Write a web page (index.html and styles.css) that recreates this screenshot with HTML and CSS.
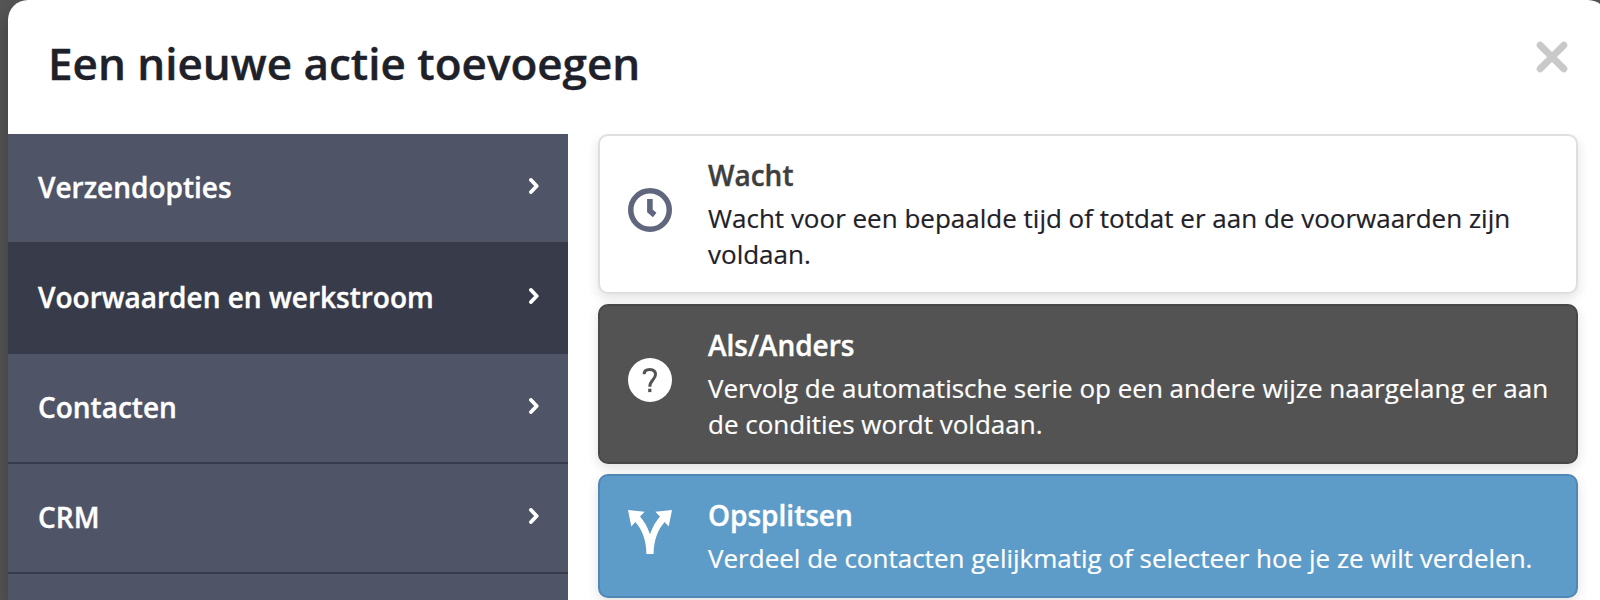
FILE: index.html
```html
<!DOCTYPE html>
<html lang="nl">
<head>
    <meta charset="UTF-8">
    <meta name="viewport" content="width=device-width, initial-scale=1.0">
    <title>Een nieuwe actie toevoegen</title>
    <link rel="stylesheet" href="styles.css">
</head>
<body>
    <div class="modal">
        <header class="modal-header">
            <h1>Een nieuwe actie toevoegen</h1>
            <button class="close" aria-label="Sluiten">
                <svg width="32" height="32" viewBox="0 0 32 32"><path d="M4.2 4.2l23.6 23.6M27.8 4.2L4.2 27.8"/></svg>
            </button>
        </header>

        <div class="modal-body">
            <nav class="sidebar">
                <a class="item">Verzendopties <svg class="chevron" width="10" height="16" viewBox="0 0 10 16"><path d="M2 2l5.7 6L2 14"/></svg></a>
                <a class="item active">Voorwaarden en werkstroom <svg class="chevron" width="10" height="16" viewBox="0 0 10 16"><path d="M2 2l5.7 6L2 14"/></svg></a>
                <a class="item">Contacten <svg class="chevron" width="10" height="16" viewBox="0 0 10 16"><path d="M2 2l5.7 6L2 14"/></svg></a>
                <a class="item">CRM <svg class="chevron" width="10" height="16" viewBox="0 0 10 16"><path d="M2 2l5.7 6L2 14"/></svg></a>
                <a class="item"></a>
            </nav>

            <div class="cards">
                <div class="card wait">
                    <svg class="icon" width="44" height="44" viewBox="0 0 44 44">
                        <circle cx="22" cy="22" r="19.25" fill="none" stroke="#5f667e" stroke-width="5.5"/>
                        <path d="M21.9 11v12l4.8 4" fill="none" stroke="#5f667e" stroke-width="5.6"/>
                    </svg>
                    <div class="text">
                        <h2>Wacht</h2>
                        <p>Wacht voor een bepaalde tijd of totdat er aan de voorwaarden zijn voldaan.</p>
                    </div>
                </div>

                <div class="card if-else">
                    <svg class="icon" width="44" height="44" viewBox="0 0 44 44">
                        <circle cx="22" cy="22" r="22" fill="#fff"/>
                        <path d="M16.1 16.3c0-3 2.2-4.9 5.7-4.9s5.7 2 5.7 5.2c0 5-5.7 5.4-5.7 12.2" fill="none" stroke="#535353" stroke-width="3"/>
                        <rect x="20.2" y="30.7" width="3.2" height="3.4" fill="#535353"/>
                    </svg>
                    <div class="text">
                        <h2>Als/Anders</h2>
                        <p>Vervolg de automatische serie op een andere wijze naargelang er aan de condities wordt voldaan.</p>
                    </div>
                </div>

                <div class="card split">
                    <svg class="icon" width="44" height="44" viewBox="0 0 44 44" fill="#fff">
                        <path d="M0 0L16.7 1.7L12 6.4C15.6 10.5 19.6 16.5 22 24.3C24.4 16.5 28.4 10.5 32 6.4L27.3 1.7L44 0L40.7 16.5L36.6 12C29.5 20 25.6 31 25.6 44H18.4C18.4 31 14.5 20 7.4 12L3.3 16.5z"/>
                    </svg>
                    <div class="text">
                        <h2>Opsplitsen</h2>
                        <p>Verdeel de contacten gelijkmatig of selecteer hoe je ze wilt verdelen.</p>
                    </div>
                </div>
            </div>
        </div>
    </div>
</body>
</html>
```

FILE: styles.css
```css
* { box-sizing: border-box; }
body { margin: 0; height: 600px; padding-left: 8px; overflow: hidden; background: #545554; font-family: "Open Sans", sans-serif; }
h1, h2, p { margin: 0; }

.modal { width: 1600px; height: 600px; background: #fff; border-radius: 20px 20px 0 0; box-shadow: 0 10px 20px rgba(0, 0, 0, 0.3); overflow: hidden; }
.modal-header { display: flex; justify-content: space-between; align-items: flex-start; height: 134px; padding: 33px 40px 0; }
.modal-header h1 { font-size: 44px; line-height: 60px; font-weight: 600; color: #1e2129; -webkit-text-stroke: 0.4px; }
.close { display: block; margin-top: 8px; padding: 0; border: none; background: none; line-height: 0; cursor: pointer; }
.close path { fill: none; stroke: #c9c9c9; stroke-width: 7; stroke-linecap: round; }

.modal-body { display: flex; height: 466px; overflow: hidden; }
.sidebar { width: 560px; background: #505467; }
.item { display: flex; justify-content: space-between; align-items: center; height: 110px; padding: 0 29px 2px 30px; border-bottom: 2px solid #383b49; color: #fff; font-size: 28px; font-weight: 600; -webkit-text-stroke: 0.4px; cursor: pointer; }
.item:last-child { height: 26px; border-bottom: none; }
.item.active { background: #383b49; }
.chevron { margin-bottom: 3px; }
.chevron path { fill: none; stroke: #fff; stroke-width: 3.8; stroke-linecap: round; stroke-linejoin: round; }

.cards { display: flex; flex-direction: column; gap: 10px; width: 980px; margin-left: 30px; }
.card { display: flex; align-items: center; padding: 20px 26px 20px 28px; border: 2px solid #dfdfdf; border-radius: 10px; box-shadow: 0 4px 12px rgba(0, 0, 0, 0.12); }
.icon { flex: none; margin: 0 36px 8px 0; }
.card h2 { font-size: 28px; line-height: 38px; font-weight: 600; -webkit-text-stroke: 0.4px; }
.card p { margin-top: 6px; font-size: 26px; line-height: 36px; -webkit-text-stroke: 0.2px; }
.wait { background: #fff; color: #1e2129; }
.wait h2 { color: #3e3e3e; }
.if-else { background: #535353; border-color: #484848; color: #fff; }
.split { background: #5d9bc9; border-color: #5087b5; color: #fff; }
```
